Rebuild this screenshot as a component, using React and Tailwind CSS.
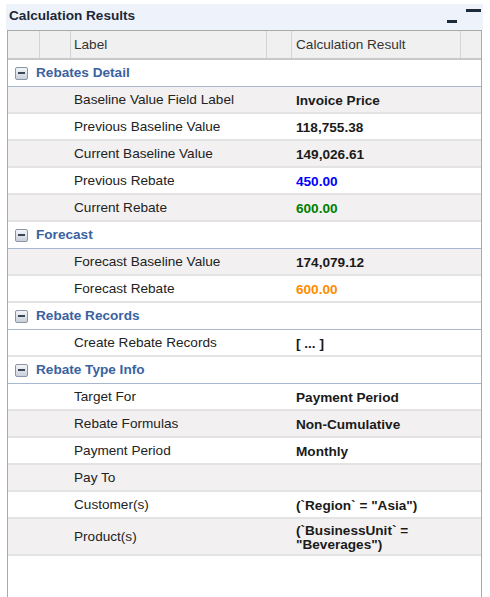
import React from "react";

const groups = [
  {
    title: "Rebates Detail",
    rows: [
      { label: "Baseline Value Field Label", value: "Invoice Price", alt: true },
      { label: "Previous Baseline Value", value: "118,755.38" },
      { label: "Current Baseline Value", value: "149,026.61", alt: true },
      { label: "Previous Rebate", value: "450.00", color: "text-[#0000ff]" },
      { label: "Current Rebate", value: "600.00", color: "text-[#008000]", alt: true },
    ],
  },
  {
    title: "Forecast",
    rows: [
      { label: "Forecast Baseline Value", value: "174,079.12", alt: true },
      { label: "Forecast Rebate", value: "600.00", color: "text-[#ff8c00]" },
    ],
  },
  {
    title: "Rebate Records",
    rows: [{ label: "Create Rebate Records", value: "[ ... ]" }],
  },
  {
    title: "Rebate Type Info",
    rows: [
      { label: "Target For", value: "Payment Period" },
      { label: "Rebate Formulas", value: "Non-Cumulative", alt: true },
      { label: "Payment Period", value: "Monthly" },
      { label: "Pay To", value: "", alt: true },
      { label: "Customer(s)", value: '(`Region` = "Asia")' },
      { label: "Product(s)", value: '(`BusinessUnit` = "Beverages")', alt: true, tall: true },
    ],
  },
];

function CollapseIcon() {
  return (
    <span className="flex h-[13px] w-[13px] items-center justify-center rounded-[2px] border border-[#8a96a8] bg-gradient-to-b from-[#f4f6f9] to-[#c9d0da]">
      <span className="block h-[2px] w-[7px] bg-[#3b4656]" />
    </span>
  );
}

export default function App() {
  return (
    <div className="h-[597px] w-[490px] bg-white pt-[4px] text-[13.6px] text-[#333] [font-family:'Liberation_Sans',Arial,sans-serif]">
      {/* title bar */}
      <div className="relative ml-[6px] h-[26px] w-[477px] bg-[#eef3fb] pl-[3px] pt-[2px]">
        <span className="font-bold text-[#1d2736]">Calculation Results</span>
        <span className="absolute left-[441px] top-[16px] block h-[3px] w-[10px] bg-[#1d2a3c]" />
        <span className="absolute left-[460px] top-[5px] block h-[3px] w-[15px] bg-[#1d2a3c]" />
      </div>

      {/* grid */}
      <div className="ml-[7px] h-[567px] w-[475px] border-x border-t border-[#a9a9a9]">
        <div className="flex h-[29px] border-b-2 border-[#c8c8c8] bg-[#f1f0f1]">
          <div className="w-[32px] border-r border-[#d4d4d4]" />
          <div className="w-[31px] border-r border-[#d4d4d4]" />
          <div className="flex w-[196px] items-center border-r border-[#d4d4d4] pl-[3px] pt-[2px]">Label</div>
          <div className="w-[25px] border-r border-[#d4d4d4]" />
          <div className="flex w-[169px] items-center border-r border-[#d4d4d4] pl-[4px] pt-[2px]">
            Calculation Result
          </div>
          <div className="flex-1" />
        </div>

        {groups.map((g) => (
          <div key={g.title}>
            <div className="flex h-[27px] items-center border-b border-[#a7b7cf] bg-white pl-[7px]">
              <CollapseIcon />
              <span className="ml-[8px] pt-[1px] font-bold text-[#3a62a0]">{g.title}</span>
            </div>
            {g.rows.map((r) => (
              <div
                key={r.label}
                className={`flex border-b-2 border-[#e4e3e4] pt-[2px] ${r.tall ? "h-[37px]" : "h-[27px]"} ${
                  r.alt ? "bg-[#f2f0f1]" : "bg-white"
                }`}
              >
                <div className="w-[63px]" />
                <div className="flex w-[221px] items-center pl-[3px] text-[#222]">{r.label}</div>
                <div
                  className={`flex w-[170px] items-center pl-[4px] font-bold leading-[14px] ${
                    r.color || "text-[#1a1a1a]"
                  }`}
                >
                  {r.value}
                </div>
              </div>
            ))}
          </div>
        ))}
      </div>
    </div>
  );
}
